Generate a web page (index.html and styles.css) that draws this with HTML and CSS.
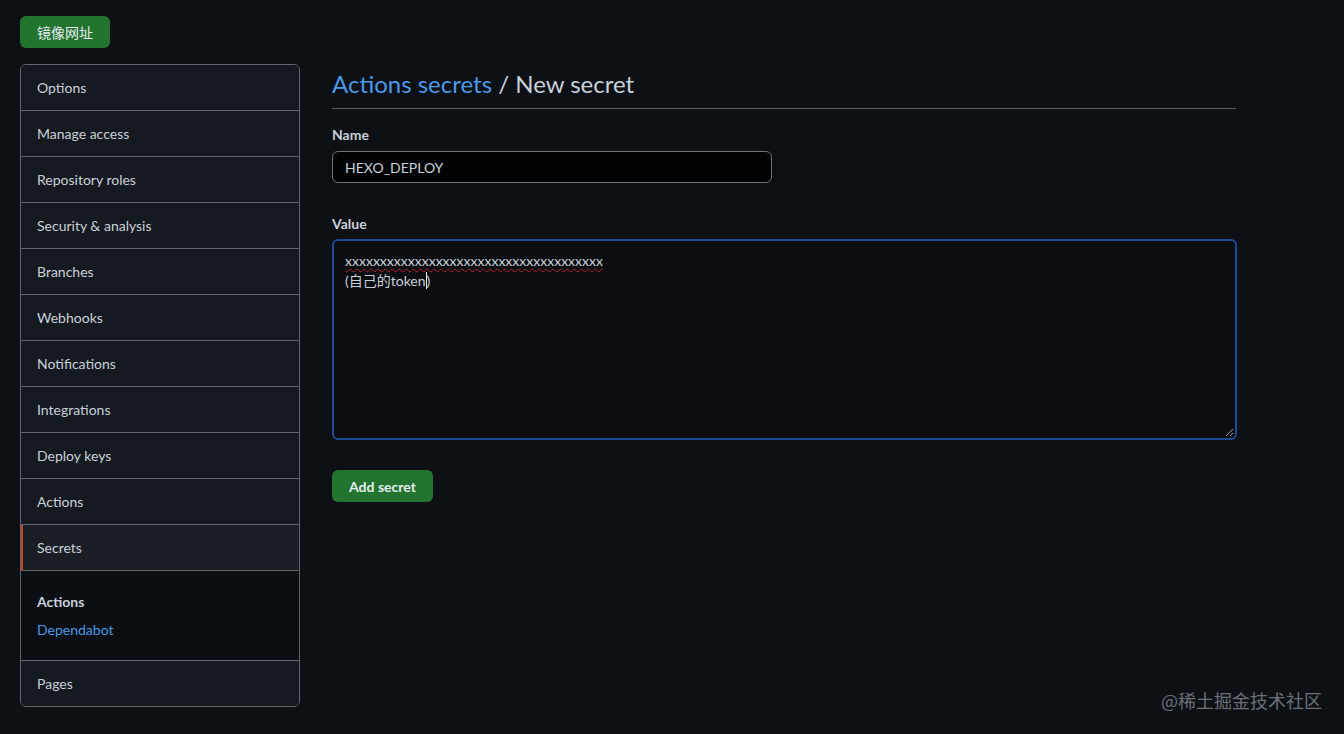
FILE: index.html
```html
<!DOCTYPE html>
<html lang="zh-CN">
<head>
  <meta charset="UTF-8">
  <title>New secret</title>
  <link rel="stylesheet" href="styles.css">
</head>
<body>
  <div class="top-bar">
    <button class="btn-green mirror-btn">镜像网址</button>
  </div>
  <div class="layout">
    <nav class="side-menu">
      <a class="menu-item" href="#">Options</a>
      <a class="menu-item" href="#">Manage access</a>
      <a class="menu-item" href="#">Repository roles</a>
      <a class="menu-item" href="#">Security &amp; analysis</a>
      <a class="menu-item" href="#">Branches</a>
      <a class="menu-item" href="#">Webhooks</a>
      <a class="menu-item" href="#">Notifications</a>
      <a class="menu-item" href="#">Integrations</a>
      <a class="menu-item" href="#">Deploy keys</a>
      <a class="menu-item" href="#">Actions</a>
      <a class="menu-item selected" href="#">Secrets</a>
      <div class="menu-section">
        <div class="section-title">Actions</div>
        <a class="section-link" href="#">Dependabot</a>
      </div>
      <a class="menu-item last" href="#">Pages</a>
    </nav>
    <main class="content">
      <h2 class="page-title"><a href="#">Actions secrets</a> / New secret</h2>
      <form class="secret-form">
        <label class="field-label">Name</label>
        <input class="name-input" type="text" value="HEXO_DEPLOY">
        <label class="field-label value-label">Value</label>
        <div class="value-box">
          <div class="value-text"><span class="misspelled">xxxxxxxxxxxxxxxxxxxxxxxxxxxxxxxxxxxxx</span><br>(自己的token<span class="caret"></span>)</div>
          <span class="resize-grip"></span>
        </div>
        <button class="btn-green add-btn" type="button">Add secret</button>
      </form>
    </main>
  </div>
  <div class="watermark">@稀土掘金技术社区</div>
</body>
</html>
```

FILE: styles.css
```css
body {
  margin: 0;
  background: #0d1014;
  font-family: Lato, 'Noto Sans CJK SC', sans-serif;
  color: #c9d1d9;
  font-size: 14px;
  line-height: 20px;
  height: 734px;
  overflow: hidden;
  position: relative;
}
.top-bar {
  padding: 16px 20px;
}
.btn-green {
  background: #22742f;
  color: #e6edf3;
  border: none;
  border-radius: 6px;
  font-family: inherit;
  cursor: pointer;
}
.mirror-btn {
  width: 90px;
  height: 32px;
  font-size: 14px;
  font-family: 'Noto Sans CJK SC', sans-serif;
  padding: 0;
}
.layout {
  display: flex;
  padding: 0 20px;
  gap: 32px;
}
.side-menu {
  width: 278px;
  border: 1px solid #5f656d;
  border-radius: 6px;
  display: flex;
  flex-direction: column;
  overflow: hidden;
  flex-shrink: 0;
}
.menu-item {
  display: flex;
  align-items: center;
  height: 45px;
  padding-left: 16px;
  background: #151920;
  color: #c9d1d9;
  text-decoration: none;
  border-bottom: 1px solid #5f656d;
}
.menu-item.selected {
  background: #1b1f25;
  border-left: 2px solid #c2451f;
  padding-left: 14px;
}
.menu-item.last {
  border-bottom: none;
}
.menu-section {
  background: #0b0e12;
  padding: 21px 16px 20px;
  border-bottom: 1px solid #5f656d;
}
.section-title {
  font-weight: 700;
  color: #c9d1d9;
  margin-bottom: 8px;
}
.section-link {
  display: block;
  color: #4a9ae6;
  text-decoration: none;
}
.content {
  width: 904px;
  padding-top: 4px;
}
.page-title {
  margin: 0;
  font-size: 24px;
  font-weight: 400;
  color: #c9d1d9;
  padding-bottom: 8px;
  border-bottom: 1px solid #5a6068;
  line-height: 32px;
}
.page-title a {
  color: #4a9ae6;
  text-decoration: none;
}
.secret-form {
  display: flex;
  flex-direction: column;
  align-items: flex-start;
  padding-top: 16px;
}
.field-label {
  font-weight: 700;
  color: #c9d1d9;
  margin-bottom: 6px;
}
.name-input {
  width: 440px;
  height: 32px;
  box-sizing: border-box;
  background: #010305;
  border: 1px solid #6e747b;
  border-radius: 6px;
  color: #c9d1d9;
  font-family: inherit;
  font-size: 14px;
  padding: 0 12px;
}
.value-label {
  margin-top: 31px;
  margin-bottom: 5px;
}
.value-box {
  position: relative;
  width: 905px;
  height: 201px;
  box-sizing: border-box;
  border: 2px solid #1c4a94;
  border-radius: 6px;
  background: #0b0d11;
  padding: 10px 11px;
}
.value-text {
  line-height: 20px;
  color: #c9d1d9;
}
.misspelled {
  text-decoration: underline wavy #b3262b;
  text-decoration-thickness: 1px;
  text-underline-offset: 2px;
}
.caret {
  display: inline-block;
  width: 1px;
  height: 17px;
  background: #e6edf3;
  vertical-align: -3px;
}
.resize-grip {
  position: absolute;
  right: 2px;
  bottom: 2px;
  width: 7px;
  height: 7px;
  background: linear-gradient(135deg, transparent 45%, #9aa0a6 45%, #9aa0a6 55%, transparent 55%, transparent 75%, #9aa0a6 75%, #9aa0a6 85%, transparent 85%);
}
.add-btn {
  margin-top: 30px;
  width: 101px;
  height: 32px;
  font-weight: 700;
  font-size: 14px;
}
.watermark {
  position: absolute;
  right: 22px;
  bottom: 22px;
  color: #6b7077;
  font-size: 18px;
  line-height: 24px;
  font-family: 'Noto Sans CJK SC', sans-serif;
}
```
